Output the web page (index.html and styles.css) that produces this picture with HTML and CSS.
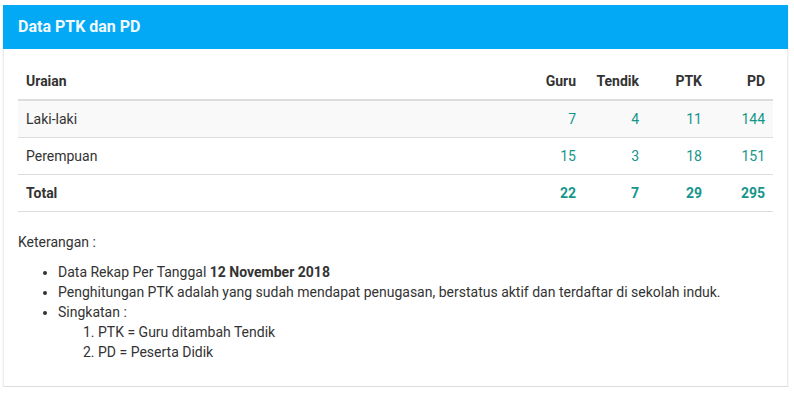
FILE: index.html
```html
<!DOCTYPE html>
<html>
<head>
<meta charset="utf-8">
<link rel="stylesheet" href="styles.css">
</head>
<body>
<div class="card">
  <div class="card-head">Data PTK dan PD</div>
  <div class="card-body">
    <table class="tbl">
      <thead>
        <tr><th class="lbl">Uraian</th><th class="num">Guru</th><th class="num">Tendik</th><th class="num">PTK</th><th class="num">PD</th></tr>
      </thead>
      <tbody>
        <tr class="striped"><td>Laki-laki</td><td class="num val">7</td><td class="num val">4</td><td class="num val">11</td><td class="num val">144</td></tr>
        <tr><td>Perempuan</td><td class="num val">15</td><td class="num val">3</td><td class="num val">18</td><td class="num val">151</td></tr>
        <tr class="total"><td>Total</td><td class="num val">22</td><td class="num val">7</td><td class="num val">29</td><td class="num val">295</td></tr>
      </tbody>
    </table>
    <p class="note">Keterangan :</p>
    <ul class="notes">
      <li>Data Rekap Per Tanggal <b>12 November 2018</b></li>
      <li>Penghitungan PTK adalah yang sudah mendapat penugasan, berstatus aktif dan terdaftar di sekolah induk.</li>
      <li>Singkatan :
        <ol>
          <li>PTK = Guru ditambah Tendik</li>
          <li>PD = Peserta Didik</li>
        </ol>
      </li>
    </ul>
  </div>
</div>
</body>
</html>
```

FILE: styles.css
```css
html, body {
  margin: 0;
  background: #fff;
}
body {
  padding: 5px 6px 0 3px;
  font-family: Roboto, "Liberation Sans", sans-serif;
  font-size: 14px;
  line-height: 20px;
  color: #333;
}
.card {
  background: #fff;
  border: 1px solid #ececec;
  border-top: 0;
  border-bottom-color: #dcdcdc;
  box-shadow: 0 1px 2px rgba(0,0,0,0.1);
}
.card-head {
  background: #03a9f4;
  color: #f2faff;
  font-weight: 700;
  font-size: 16px;
  line-height: 20px;
  padding: 12px 15px;
  margin: 0 -1px;
}
.card-body {
  padding: 14px 14px 14px;
}
.tbl {
  width: 100%;
  border-collapse: collapse;
  margin-bottom: 20px;
}
.tbl th, .tbl td {
  padding: 8px;
  text-align: left;
  line-height: 20px;
}
.tbl th {
  font-weight: 700;
  border-bottom: 2px solid #ddd;
}
.tbl td {
  border-bottom: 1px solid #ddd;
}
.tbl .num {
  text-align: right;
  width: 47px;
}
.tbl .val {
  color: #16968a;
}
.striped td {
  background: #f9f9f9;
}
.total td {
  font-weight: 700;
}
.note {
  margin: 0 0 10px;
}
.notes {
  margin: 0 0 10px;
  padding-left: 40px;
}
.notes ol {
  margin: 0;
  padding-left: 40px;
}
```
